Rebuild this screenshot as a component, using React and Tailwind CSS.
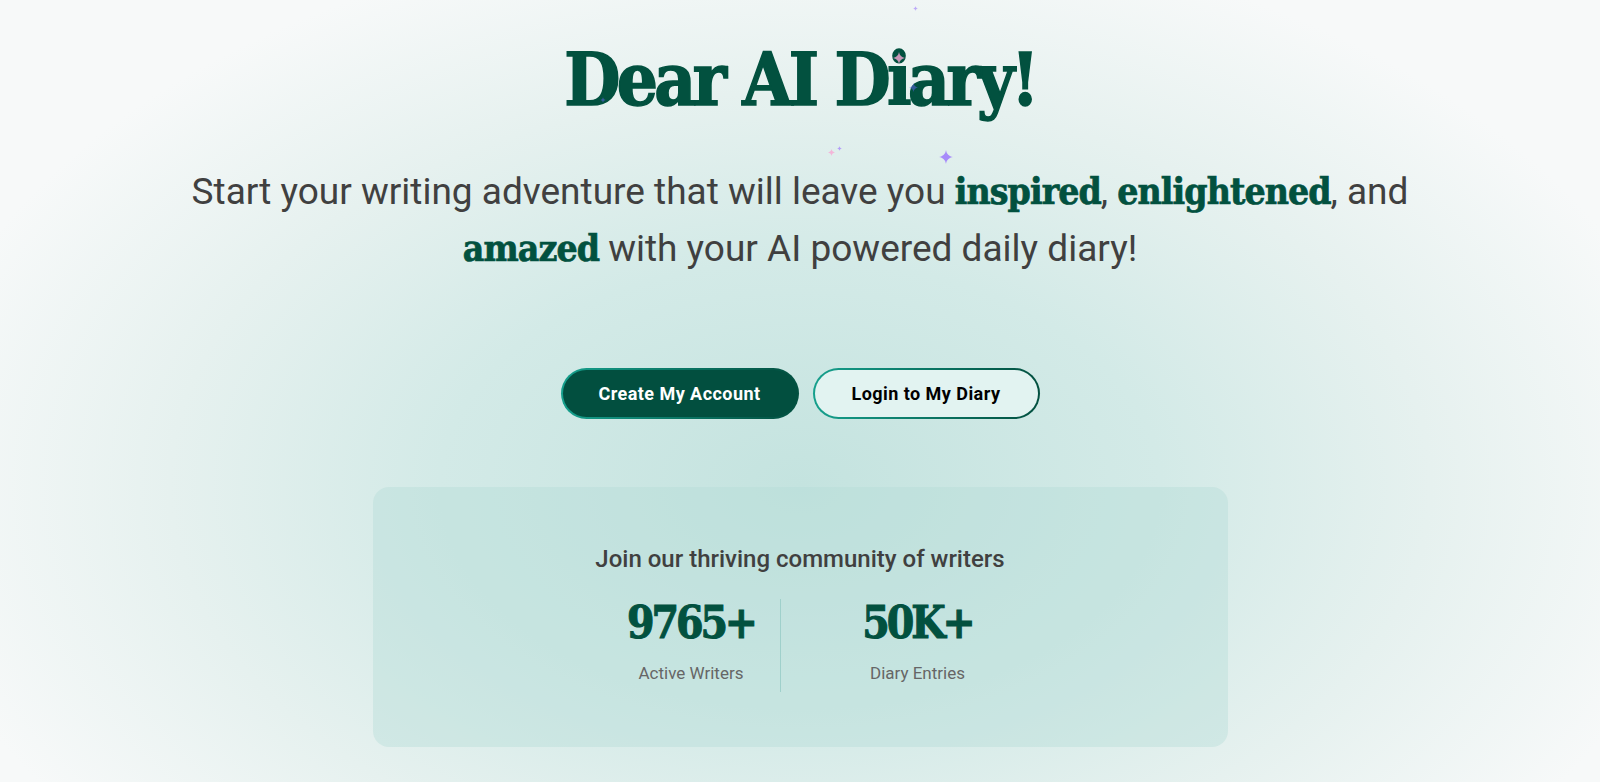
import React from 'react';

const Sparkle = ({ className }) => (
  <svg viewBox="0 0 24 24" className={className} fill="currentColor">
    <path d="M12 0C12.8 6.5 17.5 11.2 24 12C17.5 12.8 12.8 17.5 12 24C11.2 17.5 6.5 12.8 0 12C6.5 11.2 11.2 6.5 12 0Z" />
  </svg>
);

const slab = "font-['DejaVu_Serif',serif] font-bold text-[#02513f] [font-stretch:condensed]";

export default function App() {
  return (
    <div className="relative h-[782px] w-full overflow-hidden bg-[radial-gradient(ellipse_900px_560px_at_50%_62%,#c4e3df_0%,#d3eae7_40%,#e6f1ef_70%,#f7f9f9_100%)] font-['Roboto',sans-serif]">
      {/* sparkles */}
      <Sparkle className="absolute left-[913px] top-[6px] h-[5px] w-[5px] text-[#a78bfa]/70" />
      <Sparkle className="absolute left-[893px] top-[52px] h-[12px] w-[12px] text-[#f9a8d4]/80" />
      <Sparkle className="absolute left-[909px] top-[83px] h-[9px] w-[9px] text-[#6366f1]/50" />
      <Sparkle className="absolute left-[600px] top-[97px] h-[6px] w-[6px] text-[#6366f1]/50" />
      <Sparkle className="absolute left-[828px] top-[149px] h-[7px] w-[7px] text-[#f9a8d4]/80" />
      <Sparkle className="absolute left-[837px] top-[146px] h-[5px] w-[5px] text-[#a78bfa]/80" />
      <Sparkle className="absolute left-[939px] top-[150px] h-[14px] w-[14px] text-[#a78bfa]" />

      <div className="flex flex-col items-center pt-[44px]">
        <h1 className={`${slab} text-[72px] leading-none tracking-[-0.05em] [-webkit-text-stroke:1.5px_#02513f]`}>
          Dear AI Diary!
        </h1>

        <p className="mt-[47px] w-[1280px] text-center text-[37px] leading-[57px] text-[#404040]">
          Start your writing adventure that will leave you{' '}
          <span className={`${slab} tracking-tight [-webkit-text-stroke:0.7px_#02513f]`}>inspired</span>,{' '}
          <span className={`${slab} tracking-tight [-webkit-text-stroke:0.7px_#02513f]`}>enlightened</span>, and{' '}
          <span className={`${slab} tracking-tight [-webkit-text-stroke:0.7px_#02513f]`}>amazed</span> with your AI powered daily diary!
        </p>

        <div className="mt-[91px] flex items-center gap-[14px]">
          <div className="rounded-full bg-gradient-to-r from-[#16a08d] to-[#035040] p-[2px]">
            <button className="h-[47px] w-[234px] rounded-full bg-[#024f3f] text-[18px] font-bold tracking-wide text-white">
              Create My Account
            </button>
          </div>
          <div className="rounded-full bg-gradient-to-r from-[#16a08d] to-[#035040] p-[2px]">
            <button className="h-[47px] w-[223px] rounded-full bg-[#e2f3f1] text-[18px] font-bold tracking-wide text-black">
              Login to My Diary
            </button>
          </div>
        </div>

        <div className="mt-[68px] flex h-[260px] w-[855px] flex-col items-center rounded-2xl bg-[#b5dcd7]/40 pt-[54px]">
          <h2 className="text-[24px] font-medium text-[#404040]">Join our thriving community of writers</h2>
          <div className="mt-[22px] flex pl-2">
            <div className="w-[178px] pb-[5px] text-center">
              <div className={`${slab} text-[44px] leading-[1.1] tracking-[-0.07em] [-webkit-text-stroke:1px_#02513f]`}>9765+</div>
              <div className="mt-[14px] text-[17px] text-[#666]">Active Writers</div>
            </div>
            <div className="w-[226px] border-l border-[#9fd0cb] pb-[5px] pl-12 text-center">
              <div className={`${slab} text-[44px] leading-[1.1] tracking-[-0.07em] [-webkit-text-stroke:1px_#02513f]`}>50K+</div>
              <div className="mt-[14px] text-[17px] text-[#666]">Diary Entries</div>
            </div>
          </div>
        </div>
      </div>
    </div>
  );
}
